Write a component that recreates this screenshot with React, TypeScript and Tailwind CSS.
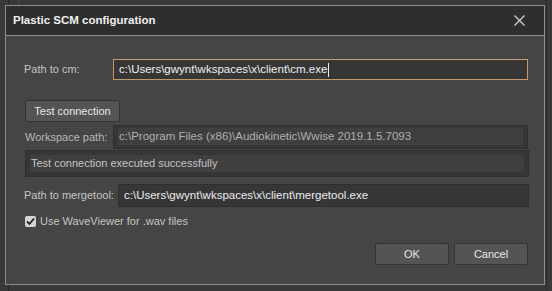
import React from "react";

const font = { fontFamily: '"Liberation Sans", Arial, sans-serif' };

export default function App() {
  return (
    <div
      className="w-[552px] h-[291px] bg-[#393939] overflow-hidden relative text-[11px] pl-[5px] pt-[5px]"
      style={font}
    >
      {/* background window edges */}
      <div className="absolute left-[8px] top-0 h-[5px] w-px bg-[#262626]" />
      <div className="absolute left-[18px] top-0 h-[5px] w-px bg-[#4a4a4a]" />
      <div className="absolute left-[8px] top-[285px] h-[6px] w-px bg-[#262626]" />
      <div className="absolute left-[546px] top-0 h-[291px] w-px bg-[#2c2c2c]" />

      <div className="w-[540px] h-[280px] border border-[#8e8e8e] flex flex-col">
        <div className="h-[30px] bg-[#2e2e2e] border-b border-[#8e8e8e] flex items-center justify-between pl-[7px] pr-[15px] shrink-0">
          <span className="text-[11.5px] font-bold text-[#f0f0f0]">Plastic SCM configuration</span>
          <svg width="11" height="11" viewBox="0 0 11 11" className="mr-[4px]">
            <path d="M0.5 0.5 L10.5 10.5 M10.5 0.5 L0.5 10.5" stroke="#d0d0d0" strokeWidth="1.3" />
          </svg>
        </div>

        <div className="flex-1 bg-[#454545] flex flex-col pl-[18px] pr-[15px]">
          {/* Path to cm */}
          <div className="mt-[23px] flex items-center h-[21px]">
            <span className="w-[89px] text-[#c4c4c4]">Path to cm:</span>
            <div className="w-[415px] h-[21px] border border-[#c39a6b] bg-[#363636] flex items-center pl-[5px] text-[#f0f0f0] text-[11.5px]">
              c:\Users\gwynt\wkspaces\x\client\cm.exe
              <span className="w-px h-[14px] bg-[#f0f0f0] ml-[1px]" />
            </div>
          </div>

          {/* Test connection */}
          <div className="mt-[20px] flex">
            <button className="w-[95px] h-[22px] ml-[1px] bg-[#545454] border border-[#333333] rounded-[2px] text-[#e8e8e8] text-[11px] flex items-center justify-center">
              Test connection
            </button>
          </div>

          {/* Workspace path */}
          <div className="mt-[3px] flex items-center h-[24px]">
            <span className="w-[89px] text-[#b8b8b8] pl-[1px]">Workspace path:</span>
            <div className="w-[415px] h-[24px] border border-[#2f2f2f] bg-[#363636] px-[4px] pt-[2px] pb-[3px]">
              <div className="h-full bg-[#3f3f3f] flex items-center pl-[1px] text-[#b0b0b0] text-[11.5px]">
                c:\Program Files (x86)\Audiokinetic\Wwise 2019.1.5.7093
              </div>
            </div>
          </div>

          {/* Status */}
          <div className="mt-[1px] ml-[1px] w-[504px] h-[27px] border border-[#2f2f2f] bg-[#363636] px-[4px] pt-[4px] pb-[4px]">
            <div className="h-full bg-[#3f3f3f] flex items-center pl-[1px] text-[#c4c4c4]">
              Test connection executed successfully
            </div>
          </div>

          {/* Path to mergetool */}
          <div className="mt-[7px] flex items-center h-[23px]">
            <span className="w-[94px] text-[#c4c4c4]">Path to mergetool:</span>
            <div className="w-[411px] h-[23px] border border-[#2f2f2f] bg-[#363636] flex items-center pl-[5px] text-[#ececec] text-[11.5px]">
              c:\Users\gwynt\wkspaces\x\client\mergetool.exe
            </div>
          </div>

          {/* Checkbox */}
          <div className="mt-[7px] flex items-center h-[14px] ml-[1px]">
            <div className="w-[11px] h-[11px] bg-[#d4d4d4] rounded-[2px] flex items-center justify-center">
              <svg width="9" height="9" viewBox="0 0 9 9">
                <path d="M1 4.5 L3.5 7 L8 1.5" stroke="#202020" strokeWidth="1.8" fill="none" />
              </svg>
            </div>
            <span className="ml-[4px] text-[#c4c4c4]">Use WaveViewer for .wav files</span>
          </div>

          {/* Buttons */}
          <div className="mt-[15px] flex justify-end gap-[5px] pr-[1px]">
            <button className="w-[74px] h-[22px] bg-[#545454] border border-[#333333] rounded-[2px] text-[#e8e8e8] text-[11px]">
              OK
            </button>
            <button className="w-[74px] h-[22px] bg-[#545454] border border-[#333333] rounded-[2px] text-[#e8e8e8] text-[11px]">
              Cancel
            </button>
          </div>
        </div>
      </div>
    </div>
  );
}
